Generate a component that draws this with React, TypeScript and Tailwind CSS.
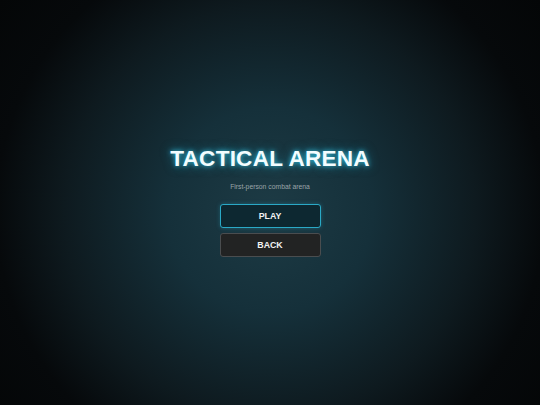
export default function App() {
  return (
    <div className="flex h-[405px] w-[540px] items-center justify-center bg-[radial-gradient(circle_at_50%_52%,#1d3b45_0%,#15303a_30%,#0e1a1f_60%,#06090b_80%,#040607_100%)] font-['Liberation_Sans',Arial,sans-serif]">
      <div className="flex flex-col items-center">
        {/* Title with cyan glow */}
        <h1 className="text-[22.6px] font-bold leading-none tracking-[0.2px] text-[#f2fdff] [text-shadow:0_0_5px_rgba(56,208,240,0.85),0_0_11px_rgba(34,190,230,0.55)]">
          TACTICAL ARENA
        </h1>
        <p className="mt-[14px] text-[6.8px] leading-none text-[#9aa4a8]">First-person combat arena</p>

        <div className="mt-[13px] flex flex-col gap-[5px]">
          <button
            type="button"
            className="flex h-[24px] w-[101px] items-center justify-center rounded-[3px] border border-[#2aa9c6] bg-[#0d2831] text-[8.8px] font-bold text-[#f2f2f2] shadow-[0_0_4px_rgba(42,169,198,0.35)]"
          >
            PLAY
          </button>
          <button
            type="button"
            className="flex h-[24px] w-[101px] items-center justify-center rounded-[3px] border border-[#4a4d4f] bg-[#222323] text-[8.8px] font-bold text-[#f2f2f2]"
          >
            BACK
          </button>
        </div>
      </div>
    </div>
  )
}
